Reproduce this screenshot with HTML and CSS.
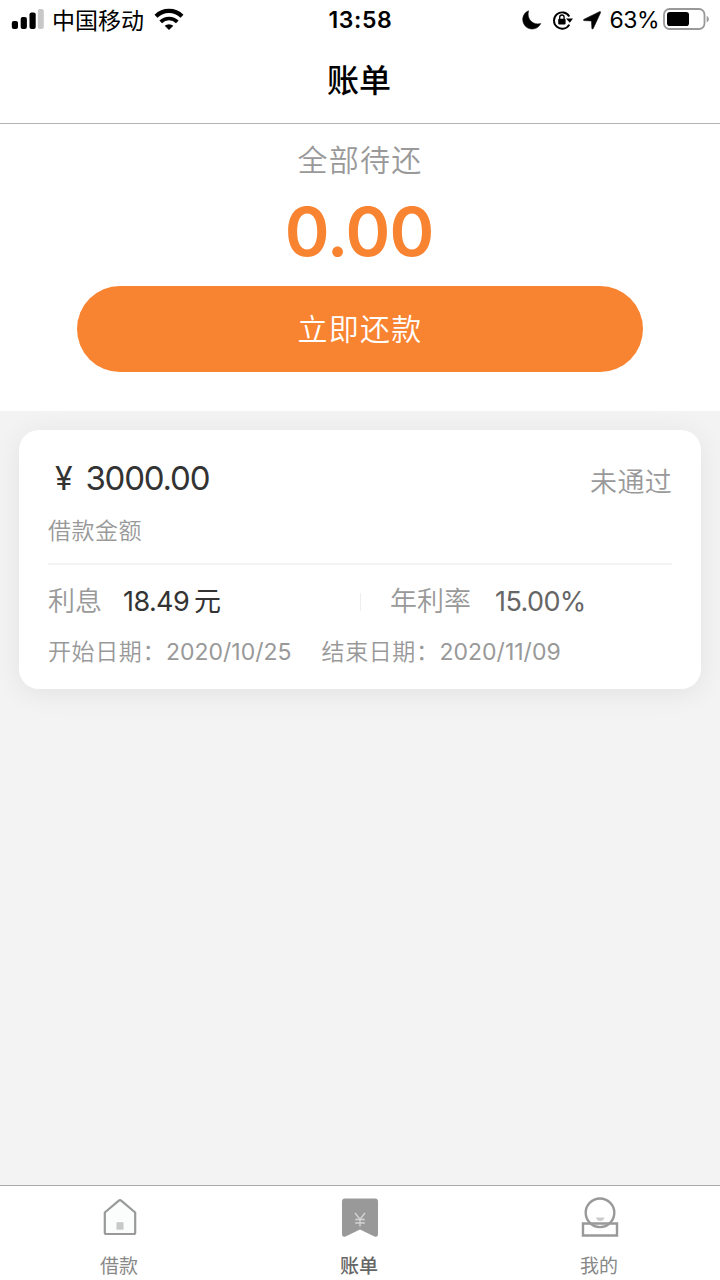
FILE: index.html
```html
<!DOCTYPE html>
<html lang="zh-CN">
<head>
<meta charset="utf-8">
<title>账单</title>
<link rel="stylesheet" href="styles.css">
</head>
<body>
<div class="app">
  <header class="header">
    <div class="status">
      <div class="status-left">
        <svg class="signal" width="33" height="22" viewBox="0 0 33 22">
          <rect x="0.800" y="13" width="6.200" height="8" rx="2"/>
          <rect x="9.700" y="9" width="6.200" height="12" rx="2"/>
          <rect x="18.500" y="4.500" width="6.200" height="16.500" rx="2"/>
          <rect x="26.800" y="1" width="6" height="20" rx="2" fill="#c8c8c8"/>
        </svg>
        <span class="carrier">中国移动</span>
        <svg class="wifi" width="30" height="22" viewBox="0 0 30 22">
          <g fill="none" stroke="#000" stroke-width="4.200">
            <path d="M2 8.300a18.500 18.500 0 0 1 26 0"/>
            <path d="M6.700 13.900a11.800 11.800 0 0 1 16.600 0" stroke-width="3.700"/>
          </g>
          <path d="M10.700 17.800a6.400 6.400 0 0 1 8.600 0L15 21.900z"/>
        </svg>
      </div>
      <div class="clock">13:58</div>
      <div class="status-right">
        <svg width="20" height="20" viewBox="0 0 20 20">
          <path d="M6.500.8C2.800 2.400.6 6 .8 10c.3 5 4.300 9 9.400 9 3.700 0 6.900-2 8.500-5.400C11.500 15.600 4.200 9.600 6.500.8z" stroke="#000" stroke-width=".6"/>
        </svg>
        <svg class="lock" width="22" height="20" viewBox="0 0 22 20">
          <path d="M17.300 14.600A8.200 8.200 0 1 1 17.300 6.500" fill="none" stroke="#000" stroke-width="1.900"/>
          <path d="M14 8.600h7L17.800 12.800z"/>
          <rect x="6.200" y="8.700" width="7.400" height="5.800" rx="1"/>
          <path d="M7.700 9V7.200a2.200 2.200 0 0 1 4.400 0V9" fill="none" stroke="#000" stroke-width="1.300"/>
        </svg>
        <svg class="arrow" width="18" height="19" viewBox="0 0 18 19">
          <path d="M17.600 1.500Q17.800.3 16.500.7L.8 8.400Q-.2 9.300 1 9.600L8.500 9.900 8.900 17.500Q9.300 18.600 10.200 17.600z" stroke="#000" stroke-width=".6"/>
        </svg>
        <span class="percent">63%</span>
        <svg class="battery" width="47" height="23" viewBox="0 0 47 23">
          <rect x="1" y="1" width="40.500" height="20" rx="5.500" fill="#fff" stroke="#999" stroke-width="1.800"/>
          <rect x="4" y="4" width="22" height="14" rx="2.800"/>
          <path d="M43.700 8q2.100.4 2.100 3.200t-2.100 3.200z" fill="#999"/>
        </svg>
      </div>
    </div>
    <h1 class="title">账单</h1>
  </header>

  <main class="main">
    <section class="summary">
      <p class="due-label">全部待还</p>
      <p class="due-amount">0.00</p>
      <button class="pay" type="button">立即还款</button>
    </section>

    <article class="card">
      <div class="card-top">
        <div>
          <p class="amount"><span class="yen">¥</span>3000.00</p>
          <p class="caption">借款金额</p>
        </div>
        <span class="state">未通过</span>
      </div>
      <div class="facts">
        <div class="fact"><span class="fact-label">利息</span><span class="interest">18.49<span class="unit">元</span></span></div>
        <div class="fact fact-rate"><span class="fact-label">年利率</span><span class="rate">15.00%</span></div>
      </div>
      <div class="dates">
        <span class="date-label">开始日期：</span><span class="date start">2020/10/25</span>
        <span class="date-label">结束日期：</span><span class="date">2020/11/09</span>
      </div>
    </article>
  </main>

  <nav class="tabs">
    <a class="tab">
      <svg width="40" height="42" viewBox="0 0 40 42">
        <path d="M4.800 16.500L18.800 4.700q1.200-.9 2.400 0L35.200 16.500V36.500a1.500 1.500 0 0 1-1.500 1.500H6.300a1.500 1.500 0 0 1-1.500-1.500z" fill="#fbfdfd" stroke="#999" stroke-width="2.200" stroke-linejoin="round"/>
        <rect x="16.500" y="26.200" width="7" height="7.500" fill="#c8c8c8"/>
      </svg>
      <span>借款</span>
    </a>
    <a class="tab active">
      <svg width="40" height="42" viewBox="0 0 40 42">
        <path d="M5 2.500h30a3 3 0 0 1 3 3V38q0 3.500-3.500 2.500L20 33.500 5.500 40.500Q2 41.500 2 38V5.500a3 3 0 0 1 3-3z" fill="#999"/>
        <path d="M15 17l5 6.300L25 17M20 23v7.500M15.200 23.500h9.600M15.200 27h9.600" fill="none" stroke="#d2d2d2" stroke-width="1.400"/>
      </svg>
      <span>账单</span>
    </a>
    <a class="tab">
      <svg width="40" height="42" viewBox="0 0 40 42">
        <g fill="none" stroke="#999" stroke-width="2.400">
          <circle cx="20" cy="16.800" r="14.300"/>
          <path d="M3 27.500h34v12H3z"/>
        </g>
        <path d="M16 21.500h8.500q-1 3.500-4.250 3.500T16 21.500z" fill="#ccc"/>
      </svg>
      <span>我的</span>
    </a>
  </nav>
</div>
</body>
</html>
```
FILE: styles.css
```css
* {
  box-sizing: border-box;
}

body {
  margin: 0;
  font-family: Inter, "Noto Sans CJK SC", sans-serif;
  color: #333;
}

p,
h1 {
  margin: 0;
}

svg {
  display: block;
  flex: none;
}

.app {
  display: flex;
  flex-direction: column;
  height: 1280px;
  background: #f3f3f3;
}

.header {
  height: 124px;
  background: #fff;
  border-bottom: 1px solid #b2b2b2;
  color: #000;
}

.status {
  display: grid;
  grid-template-columns: 1fr auto 1fr;
  align-items: center;
  height: 40px;
  padding: 0 10px 0 11px;
}

.status-left,
.status-right {
  display: flex;
  align-items: center;
  height: 40px;
}

.status-right {
  justify-content: flex-end;
}

.signal,
.wifi {
  margin-bottom: 3px;
}

.carrier {
  margin-left: 8px;
  padding-top: 1px;
  font-size: 23px;
  line-height: 40px;
}

.wifi {
  margin-left: 10px;
}

.clock {
  font-size: 23px;
  font-weight: 600;
  letter-spacing: 0.6px;
  line-height: 40px;
}

.lock {
  margin-left: 10px;
}

.arrow {
  margin-left: 9px;
}

.percent {
  margin: 0 4px 0 8px;
  font-size: 23px;
  letter-spacing: -0.5px;
  line-height: 40px;
}

.battery {
  margin-bottom: 1px;
}

.title {
  padding-right: 2px;
  font-size: 32px;
  font-weight: 500;
  line-height: 82px;
  text-align: center;
}

.main {
  flex: 1;
}

.summary {
  display: flex;
  flex-direction: column;
  align-items: center;
  height: 287px;
  padding-top: 16px;
  background: #fff;
}

.due-label {
  color: #999;
  font-size: 30px;
  font-weight: 350;
  letter-spacing: 1.2px;
  line-height: 40px;
}

.due-amount {
  margin-top: 11px;
  padding-right: 2px;
  color: #f88330;
  font-size: 68px;
  font-weight: 600;
  letter-spacing: -1px;
  line-height: 80px;
}

.pay {
  width: 566px;
  height: 86px;
  margin-top: 15px;
  padding: 0;
  border: 0;
  border-radius: 43px;
  background: #f88330;
  color: #fff;
  font-family: inherit;
  font-size: 30px;
  font-weight: 350;
  letter-spacing: 1.2px;
  line-height: 86px;
}

.card {
  height: 259px;
  margin: 19px 19px 0;
  padding: 28px 29px 0;
  border-radius: 20px;
  background: #fff;
  box-shadow: 0 4px 28px rgba(0, 0, 0, 0.07);
}

.card-top {
  display: flex;
  justify-content: space-between;
  height: 107px;
  border-bottom: 2px solid #f3f3f3;
}

.amount {
  padding-left: 7px;
  font-size: 33px;
  letter-spacing: -1.2px;
  line-height: 40px;
}

.yen {
  margin-right: 14px;
  font-size: 32px;
}

.caption {
  margin-top: 16px;
  color: #999;
  font-size: 23px;
  font-weight: 350;
  letter-spacing: 0.5px;
  line-height: 32px;
}

.state {
  margin-top: 5px;
  color: #999;
  font-size: 27px;
  font-weight: 350;
  letter-spacing: 0.3px;
  line-height: 40px;
}

.facts {
  display: grid;
  grid-template-columns: 1fr 1fr;
  margin-top: 17px;
}

.fact {
  display: flex;
  align-items: center;
  font-size: 27px;
  line-height: 40px;
}

.fact-rate {
  padding-left: 30px;
  background: linear-gradient(#eee, #eee) left center / 1px 18px no-repeat;
}

.fact-label {
  color: #999;
  font-weight: 350;
}

.interest {
  margin-left: 21px;
  letter-spacing: -0.6px;
}

.unit {
  margin-left: 5px;
}

.rate {
  margin-left: 24px;
  color: #666;
  letter-spacing: -0.6px;
}

.dates {
  display: flex;
  margin-top: 13px;
  color: #999;
  font-size: 23px;
  line-height: 34px;
}

.date-label {
  font-weight: 350;
  letter-spacing: 0.6px;
}

.start {
  margin-right: 30px;
}

.tabs {
  display: grid;
  grid-template-columns: repeat(3, 1fr);
  height: 95px;
  background: #fff;
  border-top: 1px solid #a9a9a9;
}

.tab {
  display: flex;
  flex-direction: column;
  align-items: center;
  padding-top: 10px;
  color: #888;
  font-size: 19px;
  line-height: 28px;
}

.tab span {
  margin: 15px 2px 0 0;
}

.active {
  color: #666;
  font-weight: 500;
}
```
